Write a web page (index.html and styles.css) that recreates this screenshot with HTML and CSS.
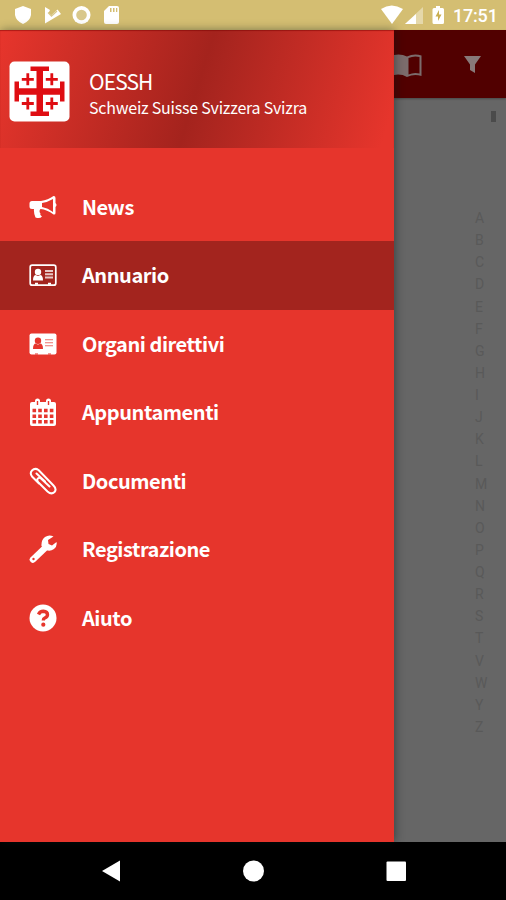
FILE: index.html
```html
<!DOCTYPE html>
<html lang="it">
<head>
<meta charset="utf-8">
<title>OESSH</title>
<link rel="stylesheet" href="styles.css">
</head>
<body>
<header class="status">
  <svg class="status-left" viewBox="0 0 130 30" width="130" height="30" fill="#fff">
    <path d="M23 6L31 9V15Q30 21 23 24Q16 21 15 15V9Z"/>
    <path d="M45 7L50 10L48.500 13L51 15.500L57.500 9.500L61 14L45 23.500Z"/>
    <path d="M48 12.500L51.500 16L57 11" fill="none" stroke="#d9c88b" stroke-width="1.300"/>
    <circle cx="81.500" cy="15" r="9"/><circle cx="81.500" cy="15" r="5.300" fill="#d9c88b"/>
    <path d="M109 6H117Q119 6 119 8V22Q119 24 117 24H106Q104 24 104 22V11Z"/>
    <path d="M110 8h1.500v4H110zM113 8h1.500v4H113zM116 8h1.300v4H116z" fill="#d4be72"/>
  </svg>
  <svg class="status-right" viewBox="380 0 66 30" width="66" height="30" fill="#fff">
    <path d="M381 9Q391.500 2 403 9L392 24Z"/>
    <path d="M423 7V24H405Z" opacity=".4"/><path d="M416 14V24H405Z"/>
    <path d="M436 6h4v2h2.500Q444 8 444 9.500V22.500Q444 24 442.500 24H434Q432.500 24 432.500 22.500V9.500Q432.500 8 434 8h2Z"/>
    <path d="M439 10L435.500 16.500H438V21L441.500 14.500H439Z" fill="#c9ae52"/>
  </svg>
  <time class="clock">17:51</time>
</header>
<main class="screen">
  <nav class="drawer">
    <div class="brand">
      <svg class="logo" viewBox="0 0 62 61" width="62" height="61">
        <rect x=".5" y=".5" width="60" height="60" rx="5" fill="#fff"/>
        <path fill="#df0d12" d="M21.500 5.500H40V10H34V27.300H51V20.500H55.500V40.500H51V33.700H34V50.500H40V55H21.500V50.500H27.500V33.700H10V40.500H5.500V20.500H10V27.300H27.500V10H21.500Z"/>
        <path fill="none" stroke="#df0d12" stroke-width="2.800" d="M12.800 18.300H24.800M18.800 12.300V24.300M36.800 18.300H48.800M42.800 12.300V24.300M12.800 42.500H24.800M18.800 36.500V48.500M36.800 42.500H48.800M42.800 36.500V48.500"/>
      </svg>
      <div class="brand-text"><div class="name">OESSH</div><div class="sub">Schweiz Suisse Svizzera Svizra</div></div>
    </div>
    <ul class="menu">
      <li><svg viewBox="0 0 28 28" fill="#fff"><path d="M3 8H12Q19 7 24.500 3Q26.500 2.800 26.500 5V10Q28.500 12 26.500 14V20Q26.500 22 24.500 21.500Q18 16.500 11.500 16Q9.500 18 11.500 20.500Q10.500 22 13 23.500Q11 26 6.500 24.500Q4.500 20 5 16H3Q.5 16 .5 13.500V10.500Q.5 8 3 8Z"/><path d="M24 6V19Q19 15 13 14V10Q19 9 24 6Z" class="hole"/></svg><span>News</span></li>
      <li class="active"><svg viewBox="0 0 28 28" fill="#fff"><rect x="1.200" y="4.200" width="25.600" height="20" rx="2" fill="none" stroke="#fff" stroke-width="1.700"/><circle cx="9" cy="11" r="3.200"/><path d="M4 19.500Q4 14 7 14Q9 16 11 14Q14 14 14 19.500Z"/><path d="M16 9h8v2h-8zM16 12.300h8v2h-8zM16 15.600h8v2h-8z" opacity=".75"/><path d="M6 21.800h3v2H6zM19 21.800h3v2h-3z"/></svg><span>Annuario</span></li>
      <li><svg viewBox="0 0 28 28" fill="#fff"><rect x=".5" y="3.500" width="27" height="21" rx="2"/><g class="hole"><circle cx="9" cy="10.700" r="3.200"/><path d="M4 19Q4 13.500 7 13.500Q9 15.500 11 13.500Q14 13.500 14 19ZM6 23.500h3v1H6zM19 23.500h3v1h-3z"/><path d="M16 9.300h8v1h-8zM16 12.300h8v1h-8zM16 15.300h8v1h-8z" opacity=".7"/></g></svg><span>Organi direttivi</span></li>
      <li><svg viewBox="0 0 28 28" fill="#fff"><rect x="1" y="4" width="26" height="24" rx="2"/><rect x="6" y=".5" width="5" height="8" rx="2.500"/><rect x="17" y=".5" width="5" height="8" rx="2.500"/><path class="hole" d="M7.800 3h1.400v4H7.800zM18.800 3h1.400v4h-1.400zM3.500 10.700h3.600v3.600H3.500zM9.200 10.700h3.600v3.600H9.200zM15 10.700h3.600v3.600H15zM20.800 10.700h3.600v3.600h-3.600zM3.500 16.400h3.600V20H3.500zM9.200 16.400h3.600V20H9.200zM15 16.400h3.600V20H15zM20.800 16.400h3.600V20h-3.600zM3.500 22h3.600v3.600H3.500zM9.200 22h3.600v3.600H9.200zM15 22h3.600v3.600H15zM20.800 22h3.600v3.600h-3.600z"/></svg><span>Appuntamenti</span></li>
      <li><svg viewBox="0 0 28 28" fill="none" stroke="#fff" stroke-width="2" stroke-linecap="round" stroke-linejoin="round"><path d="M20.500 19.500L12 11.500Q9.500 10 8.500 12Q7.800 13.500 9.500 15.500L18.500 24.500Q22.500 28 25.500 25Q28 22 24.500 18.500L9.500 3Q6 .5 3 3.500Q.5 6 3 9.500L10 16.500M7.500 6.500L16 14.500"/></svg><span>Documenti</span></li>
      <li><svg viewBox="0 0 28 28"><path d="M4 24.500L15.500 13.500" stroke="#fff" stroke-width="6.500" stroke-linecap="round"/><path fill="#fff" d="M24.500 1.500L19 5L19.500 9L23 10.500L27.500 7Q28.500 11 25 14Q21 17 17 15L12.500 11Q12 5 16 2Q20-.8 24.500 1.500Z"/><circle class="hole" cx="4.500" cy="24" r="1.200"/></svg><span>Registrazione</span></li>
      <li><svg viewBox="0 0 28 28"><circle cx="14" cy="14" r="13.500" fill="#fff"/><path d="M9.500 10.500Q11 7.300 14.300 7.300Q18.500 7.500 18.500 10.800Q18.300 13 15.800 14Q14.300 14.700 14.300 16.500" fill="none" stroke="#e6352c" stroke-width="3.400"/><circle class="hole" cx="14.300" cy="20.700" r="2.100"/></svg><span>Aiuto</span></li>
    </ul>
  </nav>
  <section class="page">
    <div class="toolbar">
      <svg viewBox="394 30 112 68" width="112" height="68">
        <path fill="#7c6c6c" d="M394 55Q401 53.500 407 56.500Q414 53 421.500 55.500V76Q414 73.500 407 77Q401 73.500 394 75Z"/>
        <path fill="#510000" d="M408.500 58Q414 55.500 419.500 57V73.500Q414 72 408.500 74.500Z"/>
        <path fill="#887979" d="M464 56H481L475 64.500V73L470 70V64.500Z"/>
      </svg>
    </div>
    <div class="content">
      <i class="thumb"></i>
      <div class="index"><b>A</b><b>B</b><b>C</b><b>D</b><b>E</b><b>F</b><b>G</b><b>H</b><b>I</b><b>J</b><b>K</b><b>L</b><b>M</b><b>N</b><b>O</b><b>P</b><b>Q</b><b>R</b><b>S</b><b>T</b><b>V</b><b>W</b><b>Y</b><b>Z</b></div>
    </div>
  </section>
</main>
<footer class="keys">
  <svg viewBox="0 842 506 58" width="506" height="58" fill="#fff"><path d="M102 871L120 860.500V881.500Z"/><circle cx="253.500" cy="871" r="10.500"/><rect x="386.500" y="861.500" width="19.500" height="19.500" rx="1"/></svg>
</footer>
</body>
</html>
```
FILE: styles.css
```css
* { box-sizing: border-box; }
body { margin: 0; width: 506px; height: 900px; overflow: hidden; display: flex; flex-direction: column; background: #000; font-family: "Noto Sans CJK JP", "Open Sans", sans-serif; }
svg { display: block; flex: none; }
.status { height: 30px; flex: none; display: flex; align-items: center; background: #d4be72; }
.status-right { margin-left: auto; }
.clock { width: 53px; margin: 2px 0 0 7px; color: #fff; font: 500 18px/28px Roboto, sans-serif; letter-spacing: -.2px; white-space: nowrap; }
.screen { height: 812px; flex: none; display: flex; }
.drawer { width: 394px; flex: none; background: #e6352c; position: relative; z-index: 1; box-shadow: 1px 0 9px rgba(0, 25, 25, .45); color: #fff; }
.brand { height: 118px; padding: 1px 0 0 9px; display: flex; align-items: center; gap: 18px; background: linear-gradient(107deg, #e6352c 1%, #a4231d 50%, #a9251f 54%, #e6352c 97%); box-shadow: inset 0 1px 1px rgba(120, 0, 0, .5); }
.logo { margin-top: 3px; }
.brand-text { padding-top: 8px; white-space: nowrap; }
.name { font-size: 21px; line-height: 27px; letter-spacing: -.9px; }
.sub { font-size: 16px; line-height: 25px; letter-spacing: -.23px; }
.menu { list-style: none; margin: 25px 0 0; padding: 0; }
.menu li { height: 68.450px; padding: 0 0 .6px 29px; display: flex; align-items: center; gap: 25px; font-size: 20px; line-height: 30px; font-weight: 700; letter-spacing: -.45px; white-space: nowrap; }
.menu svg { width: 28px; height: 28px; }
.menu .active { background: #a3241e; }
.hole { fill: #e6352c; }
.page { flex: 1; min-width: 0; background: #666; }
.toolbar { height: 68px; background: #510000; box-shadow: 0 1px 2px rgba(0, 0, 0, .3); }
.content { display: flex; flex-direction: column; }
.thumb { align-self: flex-end; width: 5px; height: 11px; margin: 13px 10px 0 0; background: #4b4b4b; }
.index { display: flex; flex-direction: column; margin: 85px 0 0 81px; color: #595959; font: 400 14px/22.130px Roboto, sans-serif; }
.index b { font-weight: 400; height: 22.130px; }
.keys { height: 58px; background: #000; }
```
